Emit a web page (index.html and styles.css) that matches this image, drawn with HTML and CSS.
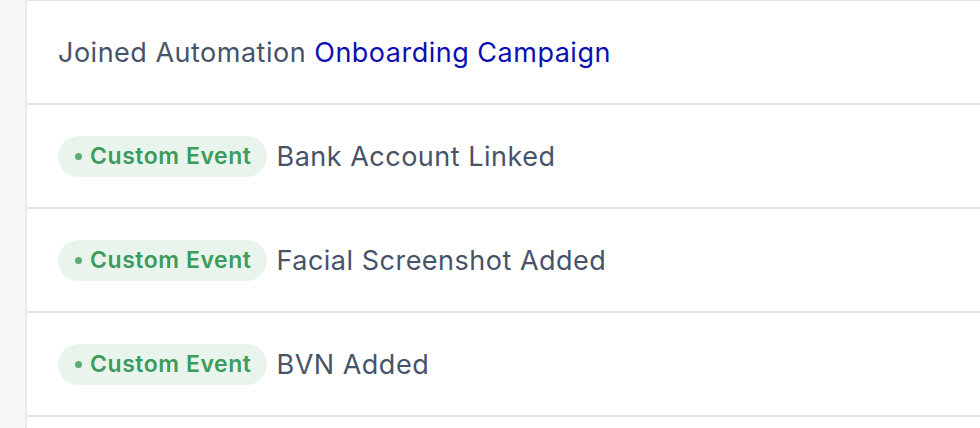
FILE: index.html
```html
<!DOCTYPE html>
<html>
<head>
<meta charset="utf-8">
<link rel="stylesheet" href="styles.css">
</head>
<body>
<div class="page">
  <div class="rail"></div>
  <div class="feed">
    <div class="row">
      <span class="text">Joined Automation <a class="link" href="#">Onboarding Campaign</a></span>
    </div>
    <div class="row">
      <span class="badge"><span class="dot"></span>Custom Event</span>
      <span class="text">Bank Account Linked</span>
    </div>
    <div class="row">
      <span class="badge"><span class="dot"></span>Custom Event</span>
      <span class="text">Facial Screenshot Added</span>
    </div>
    <div class="row">
      <span class="badge"><span class="dot"></span>Custom Event</span>
      <span class="text">BVN Added</span>
    </div>
  </div>
</div>
</body>
</html>
```
FILE: styles.css
```css
* { box-sizing: border-box; }
html, body { margin: 0; padding: 0; background: #ffffff; }
body { font-family: Inter, "Noto Sans", sans-serif; }
.page { display: flex; height: 428px; overflow: hidden; }
.rail { width: 27px; flex: none; background: #f6f7f9; border-right: 2px solid #e7e8ea; }
.feed { flex: 1; border-top: 1px solid #e5e5e5; }
.row {
  height: 104px;
  display: flex;
  align-items: center;
  gap: 9px;
  padding: 0 31px;
  border-bottom: 2px solid #e5e5e5;
}
.text { font-size: 27px; color: #465368; letter-spacing: 0.5px; }
.link { color: #0c10b0; text-decoration: none; }
.badge {
  display: inline-flex;
  align-items: center;
  height: 41px;
  padding: 0 16px 0 17px;
  border-radius: 21px;
  background: #e9f5ec;
  color: #3f9b5a;
  font-size: 23px;
  font-weight: 600;
  letter-spacing: 0.55px;
}
.dot { width: 7px; height: 7px; border-radius: 50%; background: #5fa877; margin-right: 8px; }
```
